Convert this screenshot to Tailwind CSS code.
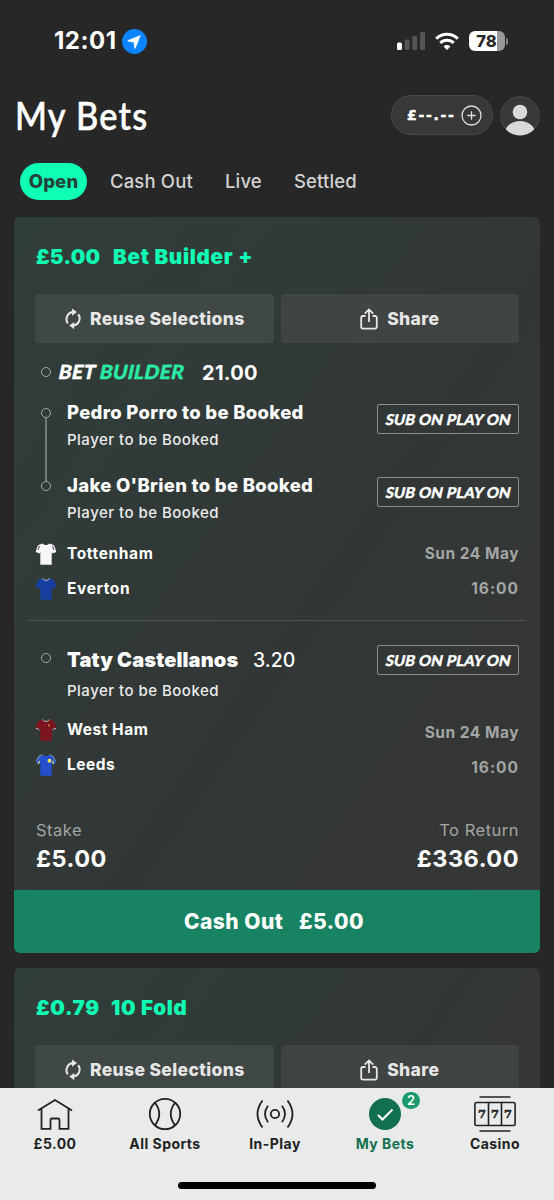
<!DOCTYPE html>
<html lang="en">
<head>
<meta charset="utf-8">
<title>My Bets</title>
<script src="https://cdn.jsdelivr.net/npm/@tailwindcss/browser@4"></script>
</head>
<body class="bg-[#272727]">
<svg class="hidden">
  <defs>
    <symbol id="reuse" viewBox="0 0 18 22">
      <path d="M3.800 15.400A7.200 7.200 0 0 1 8.600 4.100" fill="none" stroke="currentColor" stroke-width="2"/>
      <path d="M8 .5 13 4.100 8 7.700z" fill="currentColor"/>
      <path d="M14.200 6.200A7.200 7.200 0 0 1 9.600 17.600" fill="none" stroke="currentColor" stroke-width="2"/>
      <path d="M10.200 14 5.200 17.600l5 3.600z" fill="currentColor"/>
    </symbol>
    <symbol id="share" viewBox="0 0 18 22">
      <path d="M5.500 8H3a1.800 1.800 0 0 0-1.800 1.800v9A1.800 1.800 0 0 0 3 20.600h12a1.800 1.800 0 0 0 1.800-1.800v-9A1.800 1.800 0 0 0 15 8h-2.500M9 14V2M4.800 5.600 9 1.400l4.200 4.200" fill="none" stroke="currentColor" stroke-width="1.800"/>
    </symbol>
    <symbol id="shirt" viewBox="0 0 22 24">
      <path d="M7.500 1.500 4 2.800Q2.600 3.500 2 5.500L.7 10l3.900 1.600.7-1.800V22.700h11.400V9.800l.7 1.800L21.300 10 20 5.500q-.6-2-2-2.700L14.500 1.500Q11 4.500 7.500 1.500z" fill="currentColor"/>
    </symbol>
  </defs>
</svg>
<div class="flex h-[1200px] w-[554px] flex-col overflow-hidden bg-[#272727] font-[Inter,sans-serif] text-white [font-optical-sizing:none]">

  <div class="flex h-[83px] shrink-0 items-center pb-px pl-[54px] pr-[46px]">
    <span class="w-[63px] whitespace-nowrap text-[24px] font-bold tracking-[0.500px]">12:01</span>
    <svg class="ml-[5px] size-[25px]" viewBox="0 0 25 25"><circle cx="12.500" cy="12.500" r="12.500" fill="#0a84ff"/><path d="M18.300 6.500 6 11.600q-.7.500.2.700l5.700.8.700 5.800q.3.900.8.100z" fill="#fff" stroke="#fff" stroke-width=".6" stroke-linejoin="round"/></svg>
    <svg class="ml-auto h-[18px] w-[28px]" viewBox="0 0 28 18"><rect y="10.500" width="5" height="7.500" rx="1.500" fill="#fff"/><g fill="#555"><rect x="7.700" y="7.500" width="5" height="10.500" rx="1.500"/><rect x="15.300" y="4" width="5" height="14" rx="1.500"/><rect x="23" y="0" width="5" height="18" rx="1.500"/></g></svg>
    <svg class="ml-[10px] h-[18px] w-[24px]" viewBox="0 0 24 18" fill="none" stroke="#fff" stroke-width="3"><path d="M1.200 6.700a15.200 15.200 0 0 1 21.600 0M5.300 10.900a9.500 9.500 0 0 1 13.400 0"/><path d="M12 18l-3.400-3.500a4.800 4.800 0 0 1 6.800 0z" fill="#fff" stroke="none"/></svg>
    <div class="ml-[10px] flex items-center gap-[1px]">
      <div class="flex h-[20px] w-[36px] items-center justify-center rounded-[6px] bg-[linear-gradient(90deg,#fff_78%,#999_78%)] pr-px text-[16.500px] font-extrabold text-[#272727]">78</div>
      <div class="h-[7px] w-[2px] rounded-r-full bg-[#888]"></div>
    </div>
  </div>

  <header class="flex h-[68px] shrink-0 items-center pl-[15px] pr-[14px]">
    <h1 class="origin-left -translate-y-[2px] scale-x-[0.880] whitespace-nowrap font-[Lato,sans-serif] text-[39px] font-medium leading-[56px] tracking-[1.400px] [-webkit-text-stroke:0.600px_#fff]">My Bets</h1>
    <div class="ml-auto flex h-[40px] w-[102px] -translate-y-[2px] items-center rounded-full border border-[#494949] bg-[#383838] pl-[15px]">
      <span class="w-[50px] font-['DejaVu_Sans',sans-serif] text-[14px] font-bold tracking-[1.700px] [-webkit-text-stroke:0.500px_#fff]">£--.--</span>
      <svg class="ml-[4px] size-[21px]" viewBox="0 0 21 21" fill="none" stroke="#ddd"><circle cx="10.500" cy="10.500" r="9.500" stroke-width="1.300"/><path d="M10.500 6.300v8.400M6.300 10.500h8.400" stroke-width="1.300"/></svg>
    </div>
    <svg class="ml-[7px] size-[40px] -translate-y-px" viewBox="0 0 40 40"><defs><clipPath id="av"><circle cx="20" cy="20" r="19.500"/></clipPath></defs><circle cx="20" cy="20" r="19.300" fill="#383838" stroke="#494949"/><g fill="#d9d9d9" clip-path="url(#av)"><circle cx="20" cy="16" r="7.300"/><ellipse cx="20" cy="37" rx="15" ry="12"/></g></svg>
  </header>

  <nav class="flex h-[66px] shrink-0 items-start pl-[20px] pt-[12px] text-[18.500px] font-medium leading-[36px] tracking-[0.150px] text-[#d2d2d2]">
    <span class="mr-[23px] h-[37px] w-[67px] rounded-full bg-[#0fffb4] text-center font-extrabold text-[#24423a]">Open</span>
    <span class="w-[115px]">Cash Out</span>
    <span class="w-[69px]">Live</span>
    <span>Settled</span>
  </nav>

  <main class="h-[871px] shrink-0 overflow-hidden px-[14px]">
    <section class="overflow-hidden rounded-[6px] bg-[linear-gradient(125deg,#303e3a,#323736_55%,#363636)]">
      <h2 class="flex h-[77px] items-center pl-[22px] pt-[4px] text-[20.500px] font-black text-[#0fffb4]"><span class="w-[77px] tracking-[0.300px]">£5.00</span><span class="tracking-[0.750px]">Bet Builder +</span></h2>
      <div class="flex h-[49px] gap-[7px] px-[21px] text-[17.500px] font-extrabold tracking-[0.350px] text-[#e6e6e6]">
        <button class="flex flex-1 items-center justify-center gap-[8px] rounded-[4px] bg-[#404845]"><svg class="h-[22px] w-[18px]"><use href="#reuse"/></svg><span class="pt-[2px]">Reuse Selections</span></button>
        <button class="flex flex-1 items-center justify-center gap-[9px] rounded-[4px] bg-[#404544]"><svg class="h-[22px] w-[18px]"><use href="#share"/></svg><span class="pt-[2px]">Share</span></button>
      </div>
      <div class="flex h-[57px] items-center pl-[27px]">
        <span class="size-[10px] rounded-full border-[1.500px] border-[#a5aaa8]"></span>
        <span class="ml-[8px] w-[143px] -skew-x-12 whitespace-nowrap font-[Lato,sans-serif] text-[19.500px] font-black tracking-[0.300px] [-webkit-text-stroke:0.400px_currentColor]">BET <span class="text-[#2beaa5]">BUILDER</span></span>
        <span class="pt-[2px] text-[20px] font-bold tracking-[0.300px]">21.00</span>
      </div>

      <div class="flex pl-[27px] pr-[21px]">
        <div class="flex w-[26px] flex-col pt-[8px]">
          <span class="size-[10px] rounded-full border-[1.500px] border-[#a5aaa8]"></span>
          <span class="ml-[4px] h-[63px] w-[2px] bg-[#727a77]"></span>
          <span class="size-[10px] rounded-full border-[1.500px] border-[#a5aaa8]"></span>
        </div>
        <div class="flex-1">
          <div class="flex h-[73px] justify-between">
            <div><div class="text-[18.500px] font-extrabold leading-[24px] tracking-[0.300px]">Pedro Porro to be Booked</div><div class="text-[15px] font-medium leading-[32px] tracking-[0.480px] text-[#ececec]">Player to be Booked</div></div>
            <span class="mt-[4px] h-[30px] w-[142px] rounded-[2px] border border-[#8b908e] text-center font-[Lato,sans-serif] text-[15px] font-black leading-[28px] tracking-[0.100px] [-webkit-text-stroke:0.300px_#fff]"><span class="inline-block -skew-x-12">SUB ON PLAY ON</span></span>
          </div>
          <div class="flex h-[63px] justify-between">
            <div><div class="text-[18.500px] font-extrabold leading-[24px] tracking-[0.300px]">Jake O'Brien to be Booked</div><div class="text-[15px] font-medium leading-[32px] tracking-[0.480px] text-[#ececec]">Player to be Booked</div></div>
            <span class="mt-[4px] h-[30px] w-[142px] rounded-[2px] border border-[#8b908e] text-center font-[Lato,sans-serif] text-[15px] font-black leading-[28px] tracking-[0.100px] [-webkit-text-stroke:0.300px_#fff]"><span class="inline-block -skew-x-12">SUB ON PLAY ON</span></span>
          </div>
        </div>
      </div>

      <div class="flex justify-between pl-[21px] pr-[21px] text-[15.500px] font-bold leading-[35px] tracking-[0.600px]">
        <div>
          <div class="flex items-center gap-[10px]"><svg class="h-[24px] w-[22px] text-[#f7f7f9]"><use href="#shirt"/><path d="M4.500 4 3 8M17.500 4 19 8" stroke="#42465c"/></svg><span>Tottenham</span></div>
          <div class="flex items-center gap-[10px]"><svg class="h-[24px] w-[22px] text-[#163fa0]"><use href="#shirt"/><path d="M7.500 1.500Q11 5.500 14.500 1.500" fill="none" stroke="#b8c3dc"/></svg><span>Everton</span></div>
        </div>
        <div class="text-right text-[#a3a5a4]"><div class="tracking-[0.500px]">Sun 24 May</div><div class="tracking-[1px]">16:00</div></div>
      </div>

      <div class="mx-[14px] mt-[14px] h-px bg-[#4d5452]"></div>

      <div class="mt-[24px] flex h-[67px] pl-[27px] pr-[21px]">
        <span class="mr-[16px] mt-[8px] size-[10px] rounded-full border-[1.500px] border-[#a5aaa8]"></span>
        <div class="flex-1 pt-[1px]"><div class="flex text-[19.500px] leading-[28px]"><span class="w-[186px] whitespace-nowrap text-[20px] font-black tracking-[0.150px]">Taty Castellanos</span><span class="font-medium">3.20</span></div><div class="text-[15px] font-medium leading-[33px] tracking-[0.480px] text-[#ececec]">Player to be Booked</div></div>
        <span class="h-[30px] w-[142px] rounded-[2px] border border-[#8b908e] text-center font-[Lato,sans-serif] text-[15px] font-black leading-[28px] tracking-[0.100px] [-webkit-text-stroke:0.300px_#fff]"><span class="inline-block -skew-x-12">SUB ON PLAY ON</span></span>
      </div>

      <div class="flex justify-between pl-[21px] pr-[21px] text-[15.500px] font-bold leading-[35px] tracking-[0.500px]">
        <div>
          <div class="flex items-center gap-[10px]"><svg class="h-[24px] w-[22px] text-[#7d1520]"><use href="#shirt"/><path d="M7.500 1.500Q11 5.500 14.500 1.500M.8 10.200l3.500 1.400M21.200 10.200l-3.500 1.400" fill="none" stroke="#c8b7bc"/><path d="M14 6.500v2" stroke="#c8973f" stroke-width="1.500"/></svg><span>West Ham</span></div>
          <div class="flex items-center gap-[10px]"><svg class="h-[24px] w-[22px] text-[#2450cf]"><use href="#shirt"/><path d="M7.500 1.500Q3.500 2 1.500 8M14.500 1.500Q18.500 2 20.500 8" fill="none" stroke="#9fb071" stroke-width=".8"/><path d="M4.500 8 3.300 11M17.500 8l1.200 3" stroke="#e8df4f" stroke-width="1.300"/><rect x="12.700" y="6" width="3.500" height="3.500" rx="1" fill="#f1e94b"/></svg><span>Leeds</span></div>
        </div>
        <div class="pt-[3px] text-right text-[#a3a5a4]"><div>Sun 24 May</div><div class="tracking-[1px]">16:00</div></div>
      </div>

      <div class="flex h-[105px] justify-between pl-[22px] pr-[21px] pt-[32px] leading-[27px] tracking-[0.500px]">
        <div><div class="text-[16.500px] text-[#a3a5a4]">Stake</div><div class="pt-px text-[23.500px] font-bold">£5.00</div></div>
        <div class="text-right"><div class="text-[16.500px] text-[#a3a5a4]">To Return</div><div class="pt-px text-[23.500px] font-bold">£336.00</div></div>
      </div>
      <div class="flex h-[63px] items-center bg-[#178362] pl-[170px] pt-px text-[21px] font-extrabold tracking-[0.450px]"><span class="w-[115px] whitespace-nowrap">Cash Out</span><span>£5.00</span></div>
    </section>

    <section class="mt-[15px] rounded-t-[6px] bg-[linear-gradient(125deg,#303e3a,#323736_75%,#363636)]">
      <h2 class="flex h-[77px] items-center pl-[22px] pt-[4px] text-[20.500px] font-black tracking-[0.700px] text-[#0fffb4]"><span class="w-[75px]">£0.79</span><span>10 Fold</span></h2>
      <div class="flex h-[49px] gap-[7px] px-[21px] text-[17.500px] font-extrabold tracking-[0.350px] text-[#e6e6e6]">
        <button class="flex flex-1 items-center justify-center gap-[8px] rounded-[4px] bg-[#404845]"><svg class="h-[22px] w-[18px]"><use href="#reuse"/></svg><span class="pt-[2px]">Reuse Selections</span></button>
        <button class="flex flex-1 items-center justify-center gap-[9px] rounded-[4px] bg-[#404544]"><svg class="h-[22px] w-[18px]"><use href="#share"/></svg><span class="pt-[2px]">Share</span></button>
      </div>
    </section>
  </main>

  <footer class="flex h-[112px] shrink-0 flex-col items-center bg-[#e9ebea] text-[#222]">
    <div class="grid h-[94px] w-full grid-cols-5 pr-[4px] pt-[7px] text-center text-[14px] font-bold leading-[22px] tracking-[0.450px]">
      <div class="flex flex-col items-center"><svg class="h-[38px] w-[42px]" viewBox="0 0 42 38" fill="none" stroke="#222" stroke-width="1.800"><path d="M4 15.500 21 5l17 10.500M7.500 13.500v20.300h9V25q0-1.500 1.500-1.500h6q1.500 0 1.500 1.500v8.800h9V13.500"/></svg>£5.00</div>
      <div class="flex flex-col items-center"><svg class="h-[38px] w-[42px]" viewBox="0 0 42 38" fill="none" stroke="#222" stroke-width="1.800"><circle cx="21" cy="19" r="15.200"/><path d="M11 7.800q8.500 11.200 0 22.400M31 7.800q-8.500 11.200 0 22.400"/></svg>All Sports</div>
      <div class="flex flex-col items-center"><svg class="h-[38px] w-[42px]" viewBox="0 0 42 38" fill="none" stroke="#222" stroke-width="1.800"><circle cx="21" cy="19" r="4.200"/><path d="M14 10.800q-6 8.200 0 16.400M28 10.800q6 8.200 0 16.400M8.500 5.500q-10 13.500 0 27M33.500 5.500q10 13.500 0 27"/></svg>In-Play</div>
      <div class="relative flex flex-col items-center text-[#13704f]"><svg class="h-[38px] w-[42px]" viewBox="0 0 42 38" fill="none"><circle cx="21" cy="19" r="16" fill="#13704f"/><path d="m14 20 4.500 4.500 10-10" stroke="#fff" stroke-width="2"/></svg>My Bets<span class="absolute left-[72px] top-[-3px] h-[17px] w-[18px] rounded-full bg-[#1b996c] text-[13px] font-semibold leading-[17px] tracking-normal text-white">2</span></div>
      <div class="flex flex-col items-center"><svg class="h-[38px] w-[42px]" viewBox="0 0 42 38" fill="none" stroke="#222" stroke-width="1.600"><rect x=".9" y="7.500" width="40.200" height="23" rx="1.500"/><path d="M14.500 7.500v23M27.500 7.500v23M5.500 2h31M5.500 36h31"/><g fill="#222" stroke="#222" stroke-width=".5" font-family="DejaVu Serif" font-weight="700" font-size="11.500" letter-spacing="0" text-anchor="middle"><text x="8" y="23.300">7</text><text x="21" y="23.300">7</text><text x="34" y="23.300">7</text></g></svg>Casino</div>
    </div>
    <div class="h-[7px] w-[198px] rounded-full bg-black"></div>
  </footer>
</div>
</body>
</html>
